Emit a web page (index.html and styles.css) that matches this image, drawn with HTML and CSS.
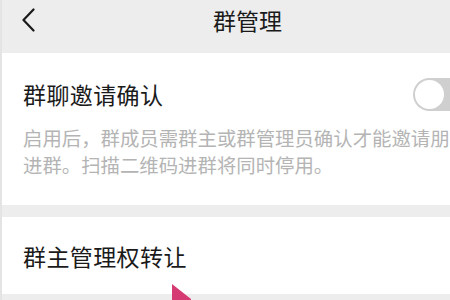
FILE: index.html
```html
<!DOCTYPE html>
<html lang="zh-CN">
<head>
<meta charset="utf-8">
<title>群管理</title>
<link rel="stylesheet" href="styles.css">
</head>
<body>
<div class="page">
  <header class="header">
    <svg class="back" width="14" height="24" viewBox="0 0 14 24"><path d="M11.5 1.5 L1.5 12 L11.5 22.5" fill="none" stroke="#1a1a1a" stroke-width="2.2" stroke-linecap="round" stroke-linejoin="round"/></svg>
    <h1 class="title">群管理</h1>
  </header>
  <section class="card first">
    <div class="row">
      <span class="label">群聊邀请确认</span>
      <span class="toggle"><span class="knob"></span></span>
    </div>
    <p class="desc"><span class="line">启用后，群成员需群主或群管理员确认才能邀请朋友</span><span class="line">进群。扫描二维码进群将同时停用。</span></p>
  </section>
  <div class="gap"></div>
  <section class="card second">
    <span class="label">群主管理权转让</span>
  </section>
  <div class="bottom"></div>
  <svg class="cursor" width="20" height="18" viewBox="0 0 20 18"><polygon points="0,0 19,15 19,18 0,18" fill="#d63a73"/></svg>
</div>
</body>
</html>
```

FILE: styles.css
```css
html, body {
  margin: 0;
  padding: 0;
  width: 450px;
  height: 300px;
  overflow: hidden;
  background: #ffffff;
}
.page {
  position: relative;
  width: 448px;
  height: 300px;
  border-left: 2px solid #e4e4e4;
  font-family: "Noto Sans CJK SC", "Noto Sans", sans-serif;
  color: #1a1a1a;
  overflow: hidden;
}
.header {
  height: 53px;
  background: #ededed;
  display: flex;
  align-items: flex-start;
  padding-left: 20px;
  box-sizing: border-box;
}
.back {
  margin-top: 8px;
  flex: none;
}
.title {
  margin: 6px 0 0 177px;
  font-size: 23px;
  line-height: 28px;
  font-weight: 400;
}
.card {
  background: #ffffff;
  padding-left: 21px;
}
.first {
  height: 152px;
  box-sizing: border-box;
  padding-top: 25px;
}
.row {
  display: flex;
  align-items: center;
  height: 32px;
}
.label {
  font-size: 23px;
  line-height: 32px;
  letter-spacing: 0.4px;
}
.toggle {
  margin-left: auto;
  margin-right: -23px;
  width: 60px;
  height: 33px;
  border-radius: 17px;
  background: #cfcfcf;
  box-sizing: border-box;
  padding: 2px;
  display: flex;
}
.knob {
  width: 29px;
  height: 29px;
  border-radius: 50%;
  background: #ffffff;
}
.desc {
  margin: 14px 0 0 0;
  font-size: 19.4px;
  line-height: 27px;
  color: #b4b4b4;
  white-space: nowrap;
}
.line {
  display: block;
}
.gap {
  height: 12px;
  background: #ededed;
}
.second {
  height: 77px;
  display: flex;
  align-items: center;
}
.bottom {
  height: 6px;
  background: #ededed;
}
.cursor {
  position: absolute;
  left: 170px;
  top: 284px;
}
```
